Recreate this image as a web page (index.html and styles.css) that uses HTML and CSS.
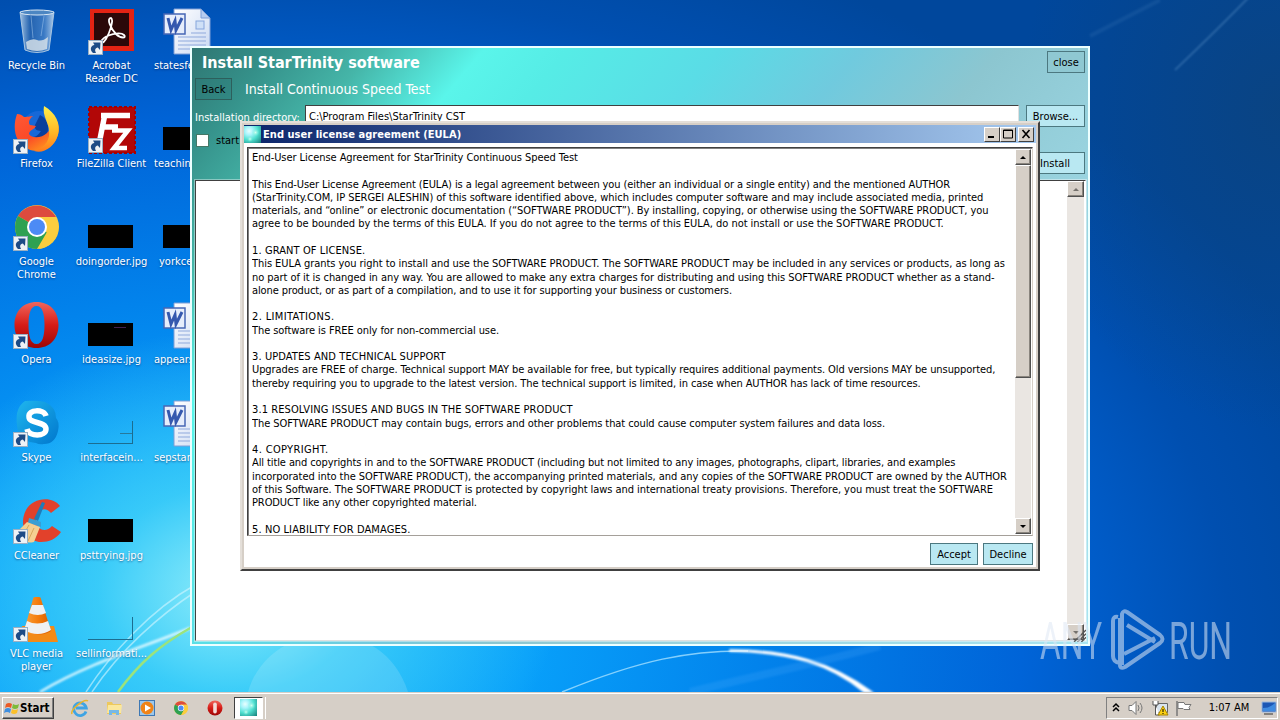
FILE: index.html
```html
<!DOCTYPE html>
<html lang="en">
<head>
    <meta charset="UTF-8">
    <meta name="viewport" content="width=device-width, initial-scale=1.0">
    <title>Install StarTrinity software</title>
    <link rel="stylesheet" href="styles.css">
</head>
<body>
    <svg class="defs">
        <defs>
            <linearGradient id="paper" x1="0" y1="0" x2="1" y2="1"><stop offset="0" stop-color="#fff"/><stop offset="1" stop-color="#c9d8f2"/></linearGradient>
            <linearGradient id="operaRed" x1="0" y1="0" x2="0" y2="1"><stop offset="0" stop-color="#f0665c"/><stop offset=".5" stop-color="#d61c17"/><stop offset="1" stop-color="#9c0606"/></linearGradient>
            <linearGradient id="glass" x1="0" y1="0" x2="1" y2="0"><stop offset="0" stop-color="#b4cfe8" stop-opacity=".9"/><stop offset=".3" stop-color="#2c66ad" stop-opacity=".8"/><stop offset=".7" stop-color="#5189c9" stop-opacity=".7"/><stop offset="1" stop-color="#c3daf0" stop-opacity=".9"/></linearGradient>
            <linearGradient id="foxFire" x1="0" y1="0" x2=".7" y2="1"><stop offset="0" stop-color="#ff5a36"/><stop offset=".6" stop-color="#fb4a28"/><stop offset="1" stop-color="#ff9a1c"/></linearGradient>
            <linearGradient id="foxTail" x1="0" y1="0" x2="0" y2="1"><stop offset="0" stop-color="#fff04a"/><stop offset=".6" stop-color="#ffb524"/><stop offset="1" stop-color="#ff7a1e"/></linearGradient>
            <linearGradient id="skypeBlue" x1="0" y1="0" x2="1" y2="1"><stop offset="0" stop-color="#1fb6ee"/><stop offset="1" stop-color="#0077cd"/></linearGradient>
            <linearGradient id="cone" x1="0" y1="0" x2="1" y2="0"><stop offset="0" stop-color="#f9a13c"/><stop offset=".5" stop-color="#f57e0e"/><stop offset="1" stop-color="#d65c00"/></linearGradient>
            <radialGradient id="orbGlow" cx=".3" cy=".3" r=".95"><stop offset="0" stop-color="#e8ffff"/><stop offset=".25" stop-color="#a8f4fb"/><stop offset=".55" stop-color="#50e0d0"/><stop offset="1" stop-color="#1a8580"/></radialGradient>
            <radialGradient id="orbSpot"><stop offset="0" stop-color="#d0fff0"/><stop offset="1" stop-color="#70eed8" stop-opacity="0"/></radialGradient>
            <symbol id="arrow" viewBox="0 0 15 15">
                <rect x=".5" y=".5" width="14" height="14" fill="#eef2f6" stroke="#9ab0c4"/>
                <path d="M5 13C1.500 10 2.500 5.500 6.500 5L5 2.500 12.500 2.500 12 10 9.800 7.600C7 8.500 6.500 10 8 13z" fill="#1d4b86"/>
            </symbol>
            <symbol id="word" viewBox="0 0 48 48">
                <path d="M11 1h27l9 9v36H11z" fill="url(#paper)" stroke="#7f9ed6"/>
                <path d="M38 1v9h9z" fill="#b6ccf0" stroke="#7f9ed6"/>
                <path d="M15 29h28M15 33h28M15 37h28M15 41h28M28 25h15" stroke="#8fa9dc"/>
                <rect x="33" y="13" width="8" height="8" fill="#cfe0f7" stroke="#86a5dc"/>
                <rect x="1" y="6" width="21" height="20" fill="#e6edfb" stroke="#4767b5" stroke-width="1.500"/>
                <path d="M5 10l3 12 4-9 1 9 6-12" fill="none" stroke="#3558ae" stroke-width="3"/>
            </symbol>
            <symbol id="chrome" viewBox="0 0 44 44">
                <circle cx="22" cy="22" r="22" fill="#fbcd3e"/>
                <path d="M22 22L3 11A22 22 0 0 1 41 12H22z" fill="#dd4b3e"/>
                <path d="M3 11a22 22 0 0 0 19 33l10-17-10-5z" fill="#2ea152"/>
                <path d="M22 12h19a22 22 0 0 1-17 32l8-16z" fill="#fbcd3e"/>
                <circle cx="22" cy="22" r="10" fill="#fff"/>
                <circle cx="22" cy="22" r="8" fill="#4c8bf5"/>
            </symbol>
            <symbol id="opera" viewBox="0 0 44 46">
                <path fill-rule="evenodd" d="M22 0C9 0 0 9 0 23s9 23 22 23 22-9 22-23S35 0 22 0zm0 4c6 0 8 8 8 19s-2 19-8 19-8-8-8-19 2-19 8-19z" fill="url(#operaRed)"/>
            </symbol>
            <symbol id="orb" viewBox="0 0 17 17">
                <rect width="17" height="17" fill="url(#orbGlow)"/>
                <circle cx="11.500" cy="6.500" r="4" fill="url(#orbSpot)"/><circle cx="6" cy="13" r="3" fill="url(#orbSpot)"/>
            </symbol>
        </defs>
    </svg>

    <div class="desktop">
        <svg class="wallpaper" viewBox="0 0 1280 692">
            <defs><filter id="soft"><feGaussianBlur stdDeviation="1.2"/></filter></defs>
            <path d="M248 692c20-72 134-82 160 0z" fill="#fff" opacity=".14"/>
            <path d="M40 692C90 662 150 645 190 628" fill="none" stroke="#e6fbff" stroke-width="2.500" opacity=".9" filter="url(#soft)"/>
            <path d="M86 692C110 655 150 610 195 585M92 692C120 650 160 615 195 592" fill="none" stroke="#d5f7ff" stroke-width="1.500" opacity=".6"/>
            <path d="M118 692C140 662 160 645 192 627" fill="none" stroke="#9be37c" stroke-width="2.500"/>
            <path d="M562 692C640 660 690 650 748 651" fill="none" stroke="#a5e0ff" stroke-width="1.500" opacity=".8"/>
            <path d="M730 650C790 650 830 662 872 692l-8 0C830 664 790 652 730 651z" fill="#fff" stroke="#fff" stroke-width="1.500" filter="url(#soft)"/>
            <path d="M690 692C760 675 830 660 880 646" fill="none" stroke="#5bb4ff" stroke-width="8" opacity=".18" filter="url(#soft)"/>
            <path d="M1175 70Q1215 32 1250 -4" fill="none" stroke="#6fa4d6" stroke-width="1.500" opacity=".45" filter="url(#soft)"/>
            <path d="M1090 36L1160 0" stroke="#6fa4d6" stroke-width="4" opacity=".12" filter="url(#soft)"/>
        </svg>

        <div class="icons">
            <div class="icon">
                <svg viewBox="0 0 48 48"><path d="M7 4h34l-5 38q-12 5-24 0z" fill="url(#glass)" stroke="#a9c6e2"/><ellipse cx="24" cy="4.500" rx="17" ry="2.500" fill="#4c86c2" stroke="#d9e8f5"/><path d="M13 34q6-4 11-2t11-3l-1 12q-10 4-20 0z" fill="#dfe6ea" opacity=".8"/><path d="M18 8l2 22M31 8l-3 20" stroke="#a8cbee" opacity=".5"/></svg>
                <span>Recycle Bin</span>
            </div>
            <div class="icon">
                <svg viewBox="0 0 48 48"><path d="M2 1h44v42H2z" fill="#e32314"/><path d="M6 5h35v33H6z" fill="#2b0809"/><path d="M23 10c-5 0 0 11 5 16 5 5 11 4 8 1-4-4-18 0-22 5-3 4 1 4 4-1 4-7 8-19 5-21z" fill="none" stroke="#fff" stroke-width="1.800"/><use href="#arrow" x="0" y="32" width="15" height="15"/></svg>
                <span>Acrobat<br>Reader DC</span>
            </div>
            <div class="icon cut"><svg><use href="#word"/></svg><span>statesfe</span></div>

            <div class="icon">
                <svg viewBox="0 0 48 48"><circle cx="26" cy="22" r="17" fill="#1668d8"/><path d="M27 9c7 3 10 12 7 19-4 8-13 9-19 3 8 1 10-2 13-6-5 0-7-3-6-6z" fill="#0a3f9c"/><path d="M4 8c3 0 5 1 7 3 5 0 7-1 9-1-4 3-5 7-3 9l6 1c-2 4-7 4-7 8 3 5 13 4 18-1 6-6 6-14 0-22 13 8 14 18 9 29-5 9-17 14-28 9C2 37-1 22 4 8z" fill="url(#foxFire)"/><path d="M31 0c12 7 17 18 14 29-4 12-14 19-24 16 13-4 16-13 15-20C36 17 29 10 31 0z" fill="url(#foxTail)"/><use href="#arrow" x="0" y="33" width="15" height="15"/></svg>
                <span>Firefox</span>
            </div>
            <div class="icon">
                <svg viewBox="0 0 48 48"><path d="M1 1h46v46H1z" fill="#b20707" stroke="#a80000" stroke-width="2" stroke-dasharray="3 2"/><path d="M13 9.500h29M12 21h18M17 8L11 38" fill="none" stroke="#fff" stroke-width="5.500"/><path d="M24 24.500h16L26 42h13" fill="none" stroke="#fff" stroke-width="4.500"/><use href="#arrow" x="0" y="32" width="15" height="15"/></svg>
                <span>FileZilla Client</span>
            </div>
            <div class="icon cut"><div class="thumb"></div><span>teaching</span></div>

            <div class="icon">
                <svg viewBox="0 0 48 48"><use href="#chrome" x="2" y="1" width="44" height="44"/><use href="#arrow" x="0" y="32" width="15" height="15"/></svg>
                <span>Google<br>Chrome</span>
            </div>
            <div class="icon"><div class="thumb"></div><span>doingorder.jpg</span></div>
            <div class="icon cut"><div class="thumb"></div><span class="in">yorkce</span></div>

            <div class="icon">
                <svg viewBox="0 0 48 48"><use href="#opera" x="1" y="0" width="45" height="46"/><use href="#arrow" x="0" y="32" width="15" height="15"/></svg>
                <span>Opera</span>
            </div>
            <div class="icon"><div class="thumb streak"></div><span>ideasize.jpg</span></div>
            <div class="icon cut"><svg><use href="#word"/></svg><span>appears</span></div>

            <div class="icon">
                <svg viewBox="0 0 48 48"><path d="M12 1q12-1 20 1 11 5 11 16 4 4 2 13-3 13-14 13-5 1-8-1-12 0-18-12-5-22 7-30z" fill="url(#skypeBlue)"/><path d="M33 16C31 9 15 9 16 17c0 7 17 4 17 12 0 8-17 8-19 0" fill="none" stroke="#fff" stroke-width="5.500"/><use href="#arrow" x="0" y="32" width="15" height="15"/></svg>
                <span>Skype</span>
            </div>
            <div class="icon"><div class="thumb clear line"></div><span>interfacein...</span></div>
            <div class="icon cut"><svg><use href="#word"/></svg><span>sepstar</span></div>

            <div class="icon">
                <svg viewBox="0 0 48 48"><path d="M47 8C40-2 20-1 13 12 5 27 14 44 28 44c8 0 15-3 20-10l-9-6c-7 8-17 3-16-8 1-9 10-12 15-5z" fill="#e2412b"/><path d="M29 4l3 1-7 18-4-2z" fill="#1f7cb9"/><path d="M16 20l12 4v5l-13-4z" fill="#3a9ed3"/><path d="M14 24l13 5-6 15q-12 3-18-9z" fill="#f5cf91"/><path d="M16 27l-7 12M21 30l-6 13" stroke="#d9a75b"/><use href="#arrow" x="0" y="31" width="15" height="15"/></svg>
                <span>CCleaner</span>
            </div>
            <div class="icon"><div class="thumb"></div><span>psttrying.jpg</span></div>
            <div class="icon"></div>

            <div class="icon">
                <svg viewBox="0 0 48 48"><path d="M9 30h32l4 16H7z" fill="#f28a17"/><path d="M22 1h4q2 0 2 2l10 32q-13 8-27 0L20 3q0-2 2-2z" fill="url(#cone)"/><path d="M19 9h11l3 8q-8 4-17 0zM14 25q10 5 21 0l3 9q-13 8-27 0z" fill="#eff1f3"/><use href="#arrow" x="0" y="31" width="15" height="15"/></svg>
                <span>VLC media<br>player</span>
            </div>
            <div class="icon"><div class="thumb clear"></div><span>sellinformati...</span></div>
        </div>

        <div class="installer">
            <div class="row title-row">
                <h1>Install StarTrinity software</h1>
                <button class="btn dim">close</button>
            </div>
            <div class="row back-row">
                <button class="btn dark">Back</button>
                <h2>Install Continuous Speed Test</h2>
            </div>
            <div class="row dir-row">
                <label>Installation directory:</label>
                <div class="path">C:\Program Files\StarTrinity CST</div>
                <button class="btn">Browse...</button>
            </div>
            <div class="row check-row">
                <i class="checkbox"></i><span>start</span>
            </div>
            <div class="row install-row"><button class="btn">Install</button></div>
            <div class="log">
                <div class="scrollbar disabled">
                    <i class="sb-btn up"></i>
                    <i class="sb-btn down"></i>
                </div>
            </div>
            <svg class="grip" viewBox="0 0 14 14"><path d="M1 14L14 1M5 14l9-9M9 14l5-5" stroke="#555" stroke-width="1.500"/></svg>
        </div>

        <div class="dialog">
            <div class="titlebar">
                <svg class="orb"><use href="#orb"/></svg>
                <b>End user license agreement (EULA)</b>
                <i class="win-btn"><svg viewBox="0 0 12 10"><path d="M2 8h6" stroke="#000" stroke-width="2"/></svg></i>
                <i class="win-btn"><svg viewBox="0 0 12 10"><path d="M1.500 1h9v8h-9zM1 1.500h10" fill="none" stroke="#000"/></svg></i>
                <i class="win-btn last"><svg viewBox="0 0 12 10"><path d="M2.500 1l7 8M9.500 1l-7 8" stroke="#000" stroke-width="1.600"/></svg></i>
            </div>
            <div class="eula">
                <div class="eula-text">
                    <p>End-User License Agreement for StarTrinity Continuous Speed Test</p>
                    <p><span class="tight">This End-User License Agreement (EULA) is a legal agreement between you (either an individual or a single entity) and the mentioned AUTHOR</span><br>
                    (StarTrinity.COM, IP SERGEI ALESHIN) of this software identified above, which includes computer software and may include associated media, printed<br>
                    <span class="snug">materials, and “online” or electronic documentation (“SOFTWARE PRODUCT”). By installing, copying, or otherwise using the SOFTWARE PRODUCT, you</span><br>
                    <span class="loose">agree to be bounded by the terms of this EULA. If you do not agree to the terms of this EULA, do not install or use the SOFTWARE PRODUCT.</span></p>
                    <p><span class="head">1. GRANT OF LICENSE.</span><br>
                    This EULA grants you right to install and use the SOFTWARE PRODUCT. The SOFTWARE PRODUCT may be included in any services or products, as long as<br>
                    no part of it is changed in any way. You are allowed to make any extra charges for distributing and using this SOFTWARE PRODUCT whether as a stand-<br>
                    <span class="tight">alone product, or as part of a compilation, and to use it for supporting your business or customers.</span></p>
                    <p><span class="head wide">2. LIMITATIONS.</span><br>
                    <span class="snug">The software is FREE only for non-commercial use.</span></p>
                    <p><span class="head">3. UPDATES AND TECHNICAL SUPPORT</span><br>
                    <span class="snug">Upgrades are FREE of charge. Technical support MAY be available for free, but typically requires additional payments. Old versions MAY be unsupported,</span><br>
                    <span class="tight">thereby requiring you to upgrade to the latest version. The technical support is limited, in case when AUTHOR has lack of time resources.</span></p>
                    <p><span class="head">3.1 RESOLVING ISSUES AND BUGS IN THE SOFTWARE PRODUCT</span><br>
                    <span class="snug">The SOFTWARE PRODUCT may contain bugs, errors and other problems that could cause computer system failures and data loss.</span></p>
                    <p><span class="head wide">4. COPYRIGHT.</span><br>
                    <span class="tight">All title and copyrights in and to the SOFTWARE PRODUCT (including but not limited to any images, photographs, clipart, libraries, and examples</span><br>
                    incorporated into the SOFTWARE PRODUCT), the accompanying printed materials, and any copies of the SOFTWARE PRODUCT are owned by the AUTHOR<br>
                    of this Software. The SOFTWARE PRODUCT is protected by copyright laws and international treaty provisions. Therefore, you must treat the SOFTWARE<br>
                    <span class="tight">PRODUCT like any other copyrighted material.</span></p>
                    <p><span class="head">5. NO LIABILITY FOR DAMAGES.</span></p>
                </div>
                <div class="scrollbar">
                    <i class="sb-btn up"></i>
                    <i class="sb-thumb"></i>
                    <i class="sb-btn down"></i>
                </div>
            </div>
            <div class="actions">
                <button class="btn">Accept</button>
                <button class="btn">Decline</button>
            </div>
        </div>

        <svg class="watermark" viewBox="0 0 204 64">
            <text x="1" y="50" textLength="62" lengthAdjust="spacingAndGlyphs">ANY</text>
            <text x="130" y="50" textLength="63" lengthAdjust="spacingAndGlyphs">RUN</text>
            <path d="M79 8q-5-1-5 4v35q0 6 7 7M83 56V5q1-4 5-2l33 23q5 4 0 8L86 58q-6 3-5-5V9M85 45l31-16M88 16l28 17"/>
        </svg>
    </div>

    <div class="taskbar">
        <button class="start">
            <svg viewBox="0 0 16 16"><path d="M2 4q3-2 6 0L7 8Q4 6 1 8z" fill="#ec5a24"/><path d="M9 4q3 2 6 0l-1 4q-3 2-6 0z" fill="#7dbb38"/><path d="M1 9q3-2 6 0l-1 4q-3-2-6 0z" fill="#3f8fe0"/><path d="M8 9q3 2 6 0l-1 4q-3 2-6 0z" fill="#fbc02a"/></svg>Start
        </button>
        <div class="quick">
            <svg viewBox="0 0 18 18"><path d="M15 12.500A6.300 6.300 0 1 1 15.300 9H5" fill="none" stroke="#3fa4e4" stroke-width="2.800"/><path d="M1 15C-1 11 13-1 17 2" fill="none" stroke="#e8b52c" stroke-width="1.500"/></svg>
            <svg viewBox="0 0 18 18"><path d="M2 3h5l1 2h8v10H2z" fill="#edc85c"/><path d="M3 6h14l-1 8H2z" fill="#fbe79c"/><path d="M4 16v-5h10v5h-3v-2H7v2z" fill="#77b8e6"/></svg>
            <svg viewBox="0 0 18 18"><rect x="1.500" y="1.500" width="15" height="15" fill="#9cc8ec" stroke="#3e78b4"/><circle cx="9" cy="9" r="6.500" fill="#f08316"/><path d="M7 5.500l6 3.500-6 3.500z" fill="#fff"/></svg>
            <svg viewBox="0 0 18 18"><use href="#chrome" x="2" y="2" width="14" height="14"/></svg>
            <svg viewBox="0 0 18 18"><circle cx="9" cy="9" r="7.500" fill="url(#operaRed)"/><rect x="7.200" y="3.500" width="3.600" height="11" rx="1.800" fill="#f3dcd8"/></svg>
        </div>
        <div class="task"><svg><use href="#orb"/></svg></div>
        <div class="tray">
            <svg width="10" viewBox="0 0 10 18"><path d="M2 8l3-3 3 3M2 12l3-3 3 3" fill="none" stroke="#000" stroke-width="1.500"/></svg>
            <svg width="18" viewBox="0 0 18 18"><path d="M2 6.500h3l4-4v13l-4-4H2z" fill="#fff" stroke="#777"/><path d="M11 6q2 3 0 6M13 4q4 5 0 10" fill="none" stroke="#777"/></svg>
            <svg width="18" viewBox="0 0 18 18"><path d="M5.500 4.500h11v9h-11z" fill="#d9e4ee" stroke="#666"/><path d="M2 2v4h5V2M4.500 6v10h4" fill="#fff" stroke="#555"/><path d="M12 7l5 9H7z" fill="#fbd012" stroke="#a98500"/><path d="M12 10v3M12 14v1" stroke="#000"/></svg>
            <svg width="18" viewBox="0 0 18 18"><path d="M2 2v15" stroke="#777" stroke-width="1.500"/><path d="M3 3.500h6l1 2h6l-2 3 1 2H9l-1-1H3z" fill="#fff" stroke="#777"/></svg>
            <span>1:07 AM</span>
            <svg width="16" viewBox="0 0 16 18"><path d="M1 3h14v10H1z" fill="#1c57b5" stroke="#9bb9df"/><path d="M2 9q7 0 12-5v8H2z" fill="#3f8be0"/><path d="M3 15h9" stroke="#333"/></svg>
        </div>
    </div>
</body>
</html>
```
FILE: styles.css
```css
*{
    box-sizing: border-box;
}
body{
    margin: 0;
    width: 1280px;
    height: 720px;
    overflow: hidden;
    display: flex;
    flex-direction: column;
    font-family: "DejaVu Sans Condensed", "DejaVu Sans", Tahoma, sans-serif;
    font-size: 11px;
    color: #000;
}
h1,h2,p{
    margin: 0;
}
button{
    font-family: inherit;
    font-size: inherit;
    padding: 0;
}
.defs{
    position: absolute;
    width: 0;
    height: 0;
}
.desktop{
    position: relative;
    height: 692px;
    overflow: hidden;
    background:
        radial-gradient(ellipse 330px 260px at 230px 590px, rgba(150,240,250,.95), rgba(80,222,248,.65) 40%, rgba(30,190,250,0) 100%),
        radial-gradient(ellipse 260px 320px at 1280px 110px, rgba(14,66,120,.7), rgba(8,62,120,0) 100%),
        radial-gradient(ellipse 1150px 760px at 240px 640px, #12b0fa 0, #08a0fa 25%, #0283ec 45%, #0064d8 68%, #004fb0 86%, #00479c 100%);
}
.wallpaper{
    position: absolute;
    left: 0;
    top: 0;
    width: 1280px;
    height: 692px;
}

/* desktop icons */
.icons{
    position: relative;
    width: 225px;
    margin-left: -1px;
    display: grid;
    grid-template-columns: 75px 75px 75px;
    grid-auto-rows: 98px;
}
.icon{
    padding-top: 8px;
    display: flex;
    flex-direction: column;
    align-items: center;
    color: #fff;
    text-align: center;
    line-height: 13px;
    text-shadow: 0 1px 2px rgba(0,30,90,.6);
    white-space: nowrap;
}
.icon svg{
    width: 48px;
    height: 48px;
    flex: none;
}
.icon span{
    margin-top: 3px;
}
.icon.cut span{
    align-self: flex-start;
    margin-left: 5px;
}
.icon.cut .in{
    margin-left: 10px;
}
.thumb{
    width: 45px;
    height: 23px;
    margin: 21px 3px 4px 0;
    background: #000;
}
.thumb.clear{
    background: none;
    border-right: 1px solid #1c6d90;
    border-bottom: 1px solid #1c6d90;
}
.thumb.line,.thumb.streak{
    background-image: linear-gradient(#27799b, #27799b);
    background-size: 12px 1px;
    background-position: 100% 55%;
    background-repeat: no-repeat;
}
.thumb.streak{
    background-image: linear-gradient(#43204f, #43204f);
    background-position: 80% 20%;
}

/* installer window */
.btn{
    height: 22px;
    border: 1px solid #4c7880;
    background: #b9e8f2;
    color: #000;
}
.btn.dim{
    width: 38px;
    background: #8fc8d2;
}
.btn.dark{
    width: 37px;
    background: rgba(40,110,110,.25);
    border-color: #2d5f5c;
}
.installer{
    position: absolute;
    left: 190px;
    top: 46px;
    width: 900px;
    height: 600px;
    border: 2px solid #ecffff;
    padding: 3px 2px 3px 3px;
    display: flex;
    flex-direction: column;
    background: linear-gradient(130deg, #2f7672 0, #35918a 6%, #45b5a8 13%, #5af5ea 21%, #56ece6 27%, #5adce6 38%, #70cade 48%, #8cc6d0 58%, #98d2de 70%, #a8e4f0 100%);
}
.row{
    display: flex;
    align-items: center;
    padding-right: 1px;
}
.title-row{
    height: 22px;
    justify-content: space-between;
}
.installer h1{
    margin-left: 7px;
    font-size: 16px;
    color: #fff;
}
.back-row{
    height: 22px;
    margin-top: 5px;
}
.installer h2{
    margin-left: 13px;
    font-size: 14px;
    font-weight: normal;
    color: #fff;
}
.dir-row{
    height: 22px;
    margin-top: 5px;
}
.dir-row label{
    width: 110px;
    padding-top: 2px;
    color: #fff;
}
.path{
    width: 714px;
    height: 22px;
    margin-right: 7px;
    padding: 4px 3px;
    background: #fff;
    border: 1px solid #404040;
    border-right-color: #e0e0e0;
}
.dir-row .btn{
    flex: 1;
    padding-top: 1px;
}
.check-row{
    height: 22px;
    margin-top: 2px;
}
.checkbox{
    width: 13px;
    height: 13px;
    margin: 0 7px 0 1px;
    background: #fff;
    border: 1px solid #476;
}
.install-row{
    height: 22px;
    margin-top: 1px;
    justify-content: flex-end;
}
.install-row .btn{
    width: 60px;
}
.log{
    flex: 1;
    margin-top: 6px;
    background: #fff;
    border: 1px solid #404040;
    border-right-color: #fff;
    border-bottom-color: #e0e0e0;
    outline: 1px solid rgba(255,255,255,.4);
    display: flex;
    justify-content: flex-end;
    padding-right: 1px;
}
.grip{
    position: absolute;
    right: 2px;
    bottom: 2px;
    width: 13px;
    height: 13px;
}

/* scrollbars */
.scrollbar{
    width: 17px;
    background: #eae6e2;
    display: flex;
    flex-direction: column;
}
.sb-btn,.sb-thumb{
    background: #d6cfc7;
    border: 1px solid;
    border-color: #fff #505050 #505050 #fff;
    box-shadow: inset -1px -1px #8a857e;
}
.sb-btn{
    height: 16px;
    display: flex;
    align-items: center;
    justify-content: center;
}
.sb-btn::after{
    content: "";
    border: 3px solid transparent;
    border-top-width: 0;
    border-bottom-color: #000;
}
.sb-btn.down{
    margin-top: auto;
}
.sb-btn.down::after{
    border-top: 3px solid #000;
    border-bottom: 0;
}
.disabled .sb-btn::after{
    opacity: .45;
}
.sb-thumb{
    height: 213px;
}

/* license dialog */
.dialog{
    position: absolute;
    left: 240px;
    top: 121px;
    width: 800px;
    height: 450px;
    padding: 2px;
    background: #fff;
    border: 2px solid;
    border-color: #e4dfd9 #404040 #404040 #e4dfd9;
    box-shadow: inset 0 0 0 2px #d6cfc7;
}
.titlebar{
    height: 18px;
    display: flex;
    align-items: center;
    background: linear-gradient(to right, #0a246a, #a6caf0);
    color: #fff;
    padding-right: 2px;
}
.titlebar b{
    flex: 1;
    margin-left: 2px;
    letter-spacing: .04px;
}
.orb{
    width: 17px;
    height: 17px;
}
.win-btn{
    width: 16px;
    height: 15px;
    background: #d6cfc7;
    border: 1px solid;
    border-color: #fff #404040 #404040 #fff;
    display: flex;
    align-items: center;
    justify-content: center;
}
.win-btn svg{
    width: 12px;
    height: 10px;
}
.win-btn.last{
    margin-left: 2px;
}
.eula{
    height: 389px;
    margin: 4px 3px 0;
    border: 1px solid #404040;
    border-right-color: #d6cfc7;
    border-bottom-color: #a5a09a;
    box-shadow: inset 1px 1px #808080;
    display: flex;
    padding: 1px 1px 1px 4px;
}
.eula-text{
    flex: 1;
    width: 0;
    height: 385px;
    overflow: hidden;
    white-space: nowrap;
    line-height: 13.280px;
    letter-spacing: -.053px;
    padding-top: 2px;
}
.eula-text p{
    margin-bottom: 13.280px;
}
.snug{
    letter-spacing: -.08px;
}
.tight{
    letter-spacing: -.102px;
}
.loose{
    letter-spacing: -.03px;
}
.head{
    letter-spacing: .1px;
}
.head.wide{
    letter-spacing: .35px;
}
.eula .scrollbar{
    width: 16px;
}
.actions{
    display: flex;
    justify-content: flex-end;
    gap: 5px;
    margin: 7px 3px 0 0;
}
.actions .btn{
    width: 48px;
    height: 22px;
}
.actions .btn + .btn{
    width: 50px;
}
.watermark{
    position: absolute;
    left: 1039px;
    top: 609px;
    width: 204px;
    height: 64px;
    opacity: .55;
}
.watermark text{
    font-family: Roboto, sans-serif;
    font-size: 52px;
    font-weight: 400;
    fill: #dfe8f5;
}
.watermark path{
    fill: none;
    stroke: #dfe8f5;
    stroke-width: 4;
    stroke-linejoin: round;
}

/* taskbar */
.taskbar{
    height: 28px;
    background: #d6cfc7;
    border-top: 1px solid #d6cfc7;
    box-shadow: inset 0 1px #fff;
    display: flex;
    align-items: center;
    padding: 2px 2px 0;
}
.start{
    width: 52px;
    height: 22px;
    display: flex;
    align-items: center;
    background: #d6cfc7;
    border: 1px solid;
    border-color: #fff #404040 #404040 #fff;
    box-shadow: inset -1px -1px #808080;
    font-weight: bold;
    font-size: 11.500px;
    padding-left: 1px;
}
.start svg{
    width: 16px;
    height: 16px;
}
.quick{
    margin-left: 17px;
    display: flex;
    gap: 15.700px;
}
.quick svg{
    width: 18px;
    height: 18px;
}
.task{
    width: 29px;
    height: 22px;
    margin-left: 10px;
    background: #fff;
    border: 1px solid #404040;
    border-right-color: #fff;
    border-bottom-color: #fff;
    box-shadow: 2px 0 #d6cfc7, 3px 0 #fff;
    display: flex;
    align-items: center;
    justify-content: center;
}
.task svg{
    width: 17px;
    height: 17px;
}
.tray{
    margin-left: auto;
    width: 172px;
    height: 22px;
    display: flex;
    align-items: center;
    border: 1px solid;
    border-color: #808080 #fff #fff #808080;
    padding-left: 4px;
    gap: 6px;
}
.tray svg{
    height: 18px;
    flex: none;
}
.tray span{
    flex: 1;
    padding-left: 4px;
    text-align: center;
    white-space: nowrap;
}
```
